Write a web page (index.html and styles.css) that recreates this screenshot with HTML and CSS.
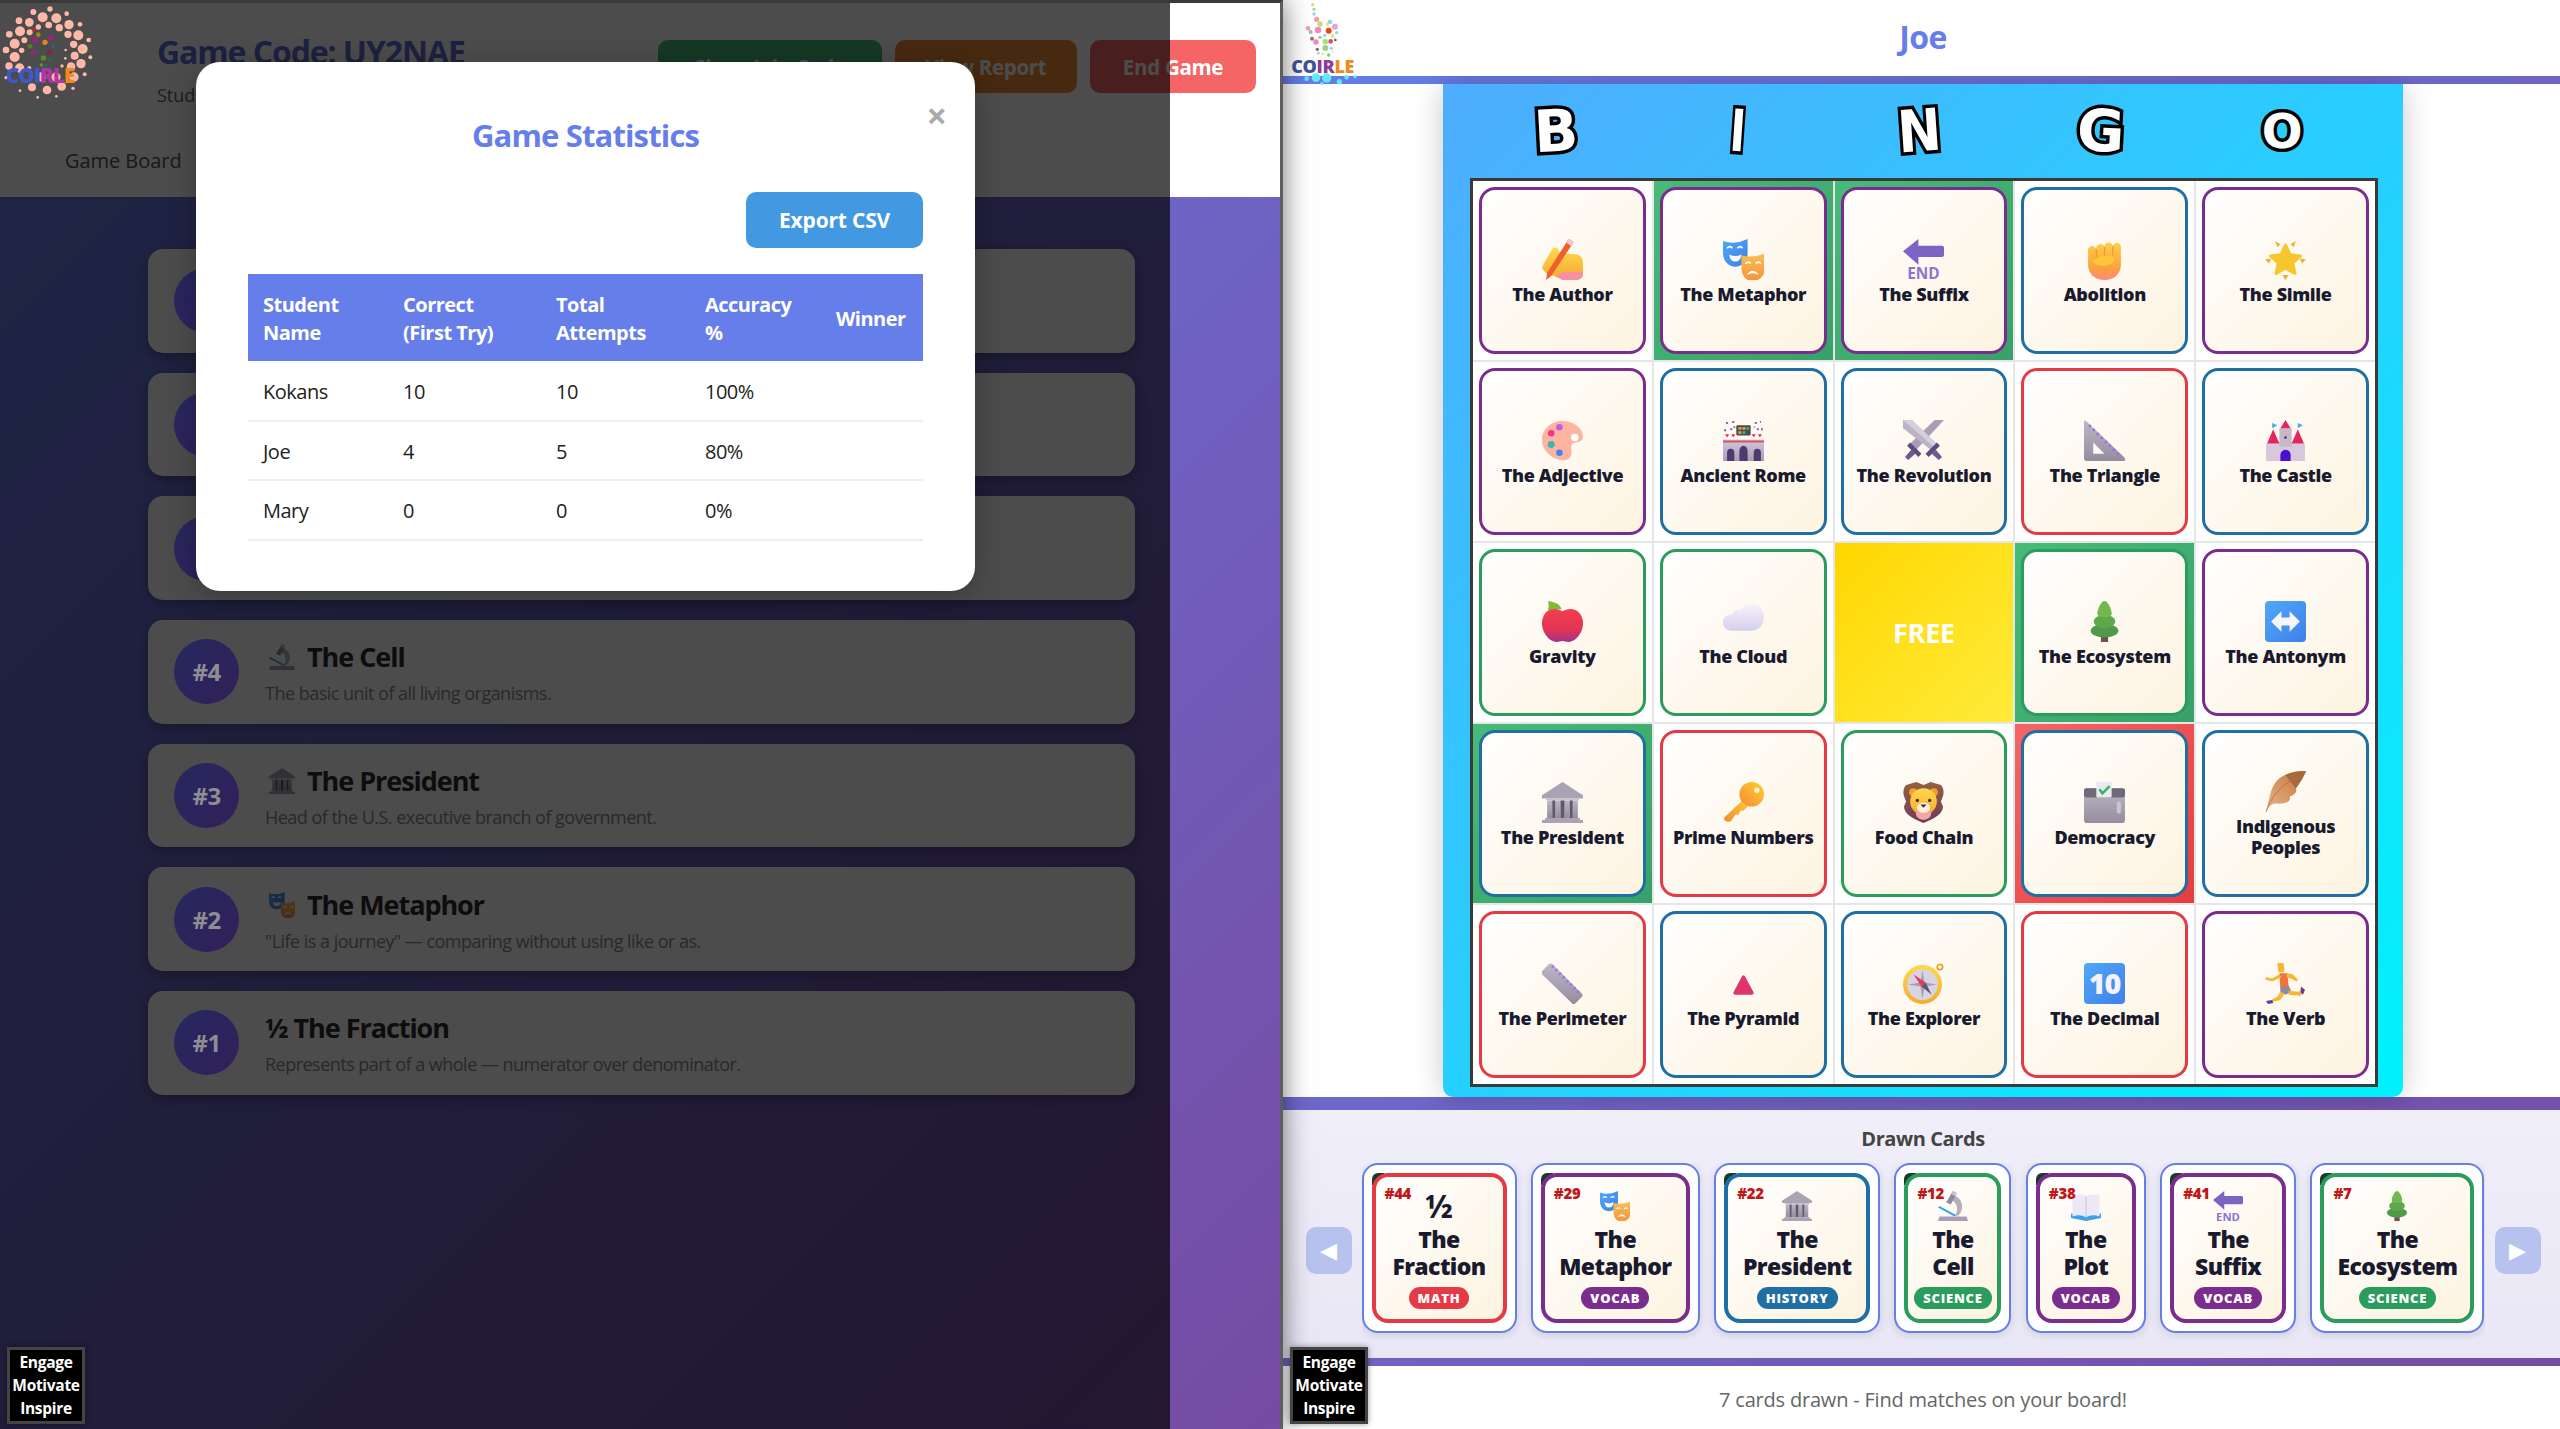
FILE: index.html
```html
<!DOCTYPE html>
<html lang="en">
<head>
<meta charset="utf-8">
<title>Bingo</title>
<link rel="stylesheet" href="styles.css">
</head>
<body>
<svg class="sprite" xmlns="http://www.w3.org/2000/svg">
<defs>
<linearGradient id="gYel" x1="0" y1="0" x2="0" y2="1"><stop offset="0" stop-color="#ffd84d"/><stop offset="1" stop-color="#f7a92e"/></linearGradient>
<linearGradient id="gFist" x1="0" y1="0" x2="0" y2="1"><stop offset="0" stop-color="#ffcf4a"/><stop offset=".7" stop-color="#fb9f3c"/><stop offset="1" stop-color="#f98a80"/></linearGradient>
<linearGradient id="gBlue" x1="0" y1="0" x2="1" y2="1"><stop offset="0" stop-color="#4fa8f8"/><stop offset="1" stop-color="#3f80ea"/></linearGradient>
<linearGradient id="gOr" x1="0" y1="0" x2="0" y2="1"><stop offset="0" stop-color="#f9c054"/><stop offset="1" stop-color="#f7933a"/></linearGradient>
<linearGradient id="gGray" x1="0" y1="0" x2="0" y2="1"><stop offset="0" stop-color="#bcb7c4"/><stop offset="1" stop-color="#938d9e"/></linearGradient>
<linearGradient id="gWall" x1="0" y1="0" x2="0" y2="1"><stop offset="0" stop-color="#d3c8dc"/><stop offset="1" stop-color="#a99cb5"/></linearGradient>
<linearGradient id="gApple" x1="0" y1="0" x2="0" y2="1"><stop offset="0" stop-color="#f63d4e"/><stop offset=".65" stop-color="#e23455"/><stop offset="1" stop-color="#a0338e"/></linearGradient>
<linearGradient id="gCloud" x1="0" y1="0" x2="0" y2="1"><stop offset="0" stop-color="#f6f4fa"/><stop offset="1" stop-color="#d5cdee"/></linearGradient>
<linearGradient id="gKey" x1="1" y1="0" x2="0" y2="1"><stop offset="0" stop-color="#ffd02e"/><stop offset="1" stop-color="#f58a36"/></linearGradient>
<linearGradient id="gFea" x1="1" y1="0" x2="0" y2="1"><stop offset="0" stop-color="#c0743a"/><stop offset="1" stop-color="#eab48a"/></linearGradient>
<linearGradient id="gMane" x1="0" y1="0" x2="0" y2="1"><stop offset="0" stop-color="#94613f"/><stop offset="1" stop-color="#6f3a5e"/></linearGradient>
</defs>
<symbol id="i-author" viewBox="0 0 40 40">
<path d="M0 28C3 21 7 15 10 10c2-3 6-2 6 2l5 2 12 1c5 0 7 4 7 9v10c0 4-3 6-7 6H20l-8-4C7 35 2 33 0 28Z" fill="url(#gYel)"/>
<path d="M14 36l6-4h20v2c0 4-3 6-7 6H20Z" fill="#f78fa0"/>
<path d="M26 0l5 3L9 36l-5 4 1-7Z" fill="#f1602c"/><path d="M26 0l5 3-2 4-5-3Z" fill="#f6c6c8"/>
</symbol>
<symbol id="i-masks" viewBox="0 0 40 40">
<path d="M0 2Q12 6 24 0V14C24 22 18 27 12 27 6 27 0 22 0 14Z" fill="url(#gBlue)"/>
<path d="M4 9q3-3 5 0M14 9q3-3 5 0" stroke="#fff" stroke-width="1.6" fill="none"/><path d="M6 15Q12 18 18 15 17 22 12 22T6 15Z" fill="#fff"/>
<path d="M18 16Q29 19 41 14V28C41 36 35 41 29 41 23 41 18 36 18 28Z" fill="url(#gOr)"/>
<path d="M22 24q3-3 5 0M32 24q3-3 5 0" stroke="#fff" stroke-width="1.6" fill="none"/><path d="M23 35Q29 27 35 35 29 32 23 35Z" fill="#fff"/>
</symbol>
<symbol id="i-arrowend" viewBox="0 0 40 40">
<path d="M0 12 15 0V6.500H38q2 0 2 2v7q0 2-2 2H15V25Z" fill="#7c64c6"/>
</symbol>
<symbol id="i-fist" viewBox="0 0 40 40">
<path d="M4 12a4 4 0 0 1 8-2 4 4 0 0 1 8-2 4 4 0 0 1 8-1 4 4 0 0 1 8 2V25C36 34 29 40 20 40 11 40 4 34 4 25Z" fill="url(#gFist)"/>
<path d="M12 10v8M20 8v8M28 7v9" stroke="#e99a2e" stroke-width="1.200"/>
<path d="M8 22Q18 14 30 18 29 25 21 26 13 27 8 22Z" fill="#ffc53d"/>
</symbol>
<symbol id="i-star" viewBox="0 0 40 40">
<path d="M20 6l4.500 9.500 10 1-7.500 7 2.200 10L20 28.500 10.800 33.500l2.200-10-7.500-7 10-1Z" fill="#f6c72c" stroke="#f6c72c" stroke-width="3" stroke-linejoin="round"/>
<path d="M10 2l5 3-3 3ZM30 2l-5 3 3 3ZM0 20l6-1-2 5ZM40 20l-6-1 2 5ZM20 40l-3-5h6Z" fill="#edb321"/>
</symbol>
<symbol id="i-palette" viewBox="0 0 40 40">
<path d="M20 1C32 1 40 9 40 16 40 23 32 20 29 24 27 28 31 33 27 37 23 41 17 39 12 37 4 33 0 26 0 19 0 9 9 1 20 1Z" fill="#ffb4a2"/>
<circle cx="32" cy="17" r="3.600" fill="#fff"/><circle cx="17" cy="7" r="3.200" fill="#c25be6"/><circle cx="9" cy="13" r="3.200" fill="#f2348a"/><circle cx="9" cy="24" r="3.400" fill="#38b6b0"/><circle cx="17" cy="32" r="3.200" fill="#3f86f0"/>
</symbol>
<symbol id="i-rome" viewBox="0 0 40 40">
<path d="M0 19H40V40H0Z" fill="url(#gWall)"/><path d="M0 20H40V22H0Z" fill="#e0505e"/>
<path d="M4 40V32a3.500 4 0 0 1 7 0v8ZM16 40V30a4 5 0 0 1 8 0v10ZM30 40V32a3.500 4 0 0 1 7 0v8Z" fill="#51386e"/>
<rect x="13" y="5" width="14" height="10" rx="1" fill="#4e4856"/><rect x="15" y="7" width="3" height="2.500" fill="#f2a03c"/><rect x="19" y="7" width="3" height="2.500" fill="#f2a03c"/><rect x="23" y="7" width="2.500" height="2.500" fill="#3fb56a"/><rect x="15" y="11" width="3" height="2.500" fill="#f2a03c"/><rect x="19" y="11" width="3" height="2.500" fill="#3fb56a"/>
<path d="M2 14h4l-2 3ZM8 14h4l-2 3ZM28 14h4l-2 3ZM34 14h4l-2 3Z" fill="#e0305e"/>
<path d="M3 2h2v2H3ZM9 1h2v2H9ZM7 8h2v2H7ZM31 2h2v2h-2ZM36 1h1v2h-1ZM33 8h2v2h-2ZM1 9h2v2H1ZM37 8h2v2h-2Z" fill="#8b5fb8"/><path d="M10 6h2v2h-2ZM30 6h1v2h-1Z" fill="#49b86e"/>
</symbol>
<symbol id="i-swords" viewBox="0 0 40 40">
<path d="M40 0H31L7 23l6 6Z" fill="#a79fb5"/>
<path d="M0 0H9L33 23l-6 6Z" fill="#d4cfdc"/><path d="M0 0 30 26l-3 3L0 8Z" fill="#b9b3c5"/>
<path d="M4 25l3-3 11 11-3 3ZM36 25l-3-3-11 11 3 3Z" fill="#5d4a7e"/>
<path d="M8 29l4 4-7 6-3-3ZM32 29l-4 4 7 6 3-3Z" fill="#6d5990"/>
</symbol>
<symbol id="i-triangle" viewBox="0 0 40 40">
<path d="M0 2Q0 0 2 1L39 36Q42 40 38 40H3Q0 40 0 37Z" fill="url(#gGray)"/>
<path d="M9 22 20 33H9Z" fill="#fffaf2"/>
<path d="M5 5 36 36" stroke="#9a68f0" stroke-width="2.500" stroke-dasharray="2 3.500" fill="none"/>
</symbol>
<symbol id="i-castle" viewBox="0 0 40 40">
<path d="M1 23h4v-2h4v2h4v-2h14v2h4v-2h4v2h4V40H1Z" fill="#d7c8de"/>
<rect x="14" y="8" width="12" height="18" fill="#c8b9c6"/>
<path d="M20 0l5 8H15ZM8 9l6 14H2ZM32 9l6 14H26Z" fill="#e8245f"/>
<path d="M15 40V34a5 5 0 0 1 10 0v6Z" fill="#4a0fd0"/><circle cx="20" cy="17" r="1.200" fill="#4a0fd0"/>
<path d="M7 8V3l5 2ZM32 8V3l5 2Z" fill="#38b6e0"/>
</symbol>
<symbol id="i-apple" viewBox="0 0 40 40">
<path d="M4 9C8 10 6 0 6 0 12 1 18 3 19 8Z" fill="#7dbb32"/>
<path d="M20 10C26 6 38 6 40 20 41 30 33 40 26 40 23 40 22 39 20 39S17 40 14 40C7 40 -1 30 0 20 2 6 14 6 20 10Z" fill="url(#gApple)"/>
</symbol>
<symbol id="i-cloud" viewBox="0 0 40 40">
<path d="M9 29C3 29 0 25 0 21 0 16 4 13 9 13 11 9 14 8 17 9 20 4 25 2 30 3 36 4 40 9 40 15 40 23 35 29 27 29Z" fill="url(#gCloud)"/>
</symbol>
<symbol id="i-tree" viewBox="0 0 40 40">
<path d="M16.500 34h7v6h-7Z" fill="#7b4a52"/>
<ellipse cx="20" cy="29" rx="13.500" ry="6.500" fill="#4f9a4a"/>
<ellipse cx="20" cy="20" rx="10.500" ry="6.500" fill="#5ea84c"/>
<path d="M20 0C23 0 27 8 27 12 27 15 24 16 20 16S13 15 13 12C13 8 17 0 20 0Z" fill="#72b84f"/>
</symbol>
<symbol id="i-arrows" viewBox="0 0 40 40">
<rect width="40" height="40" rx="4" fill="url(#gBlue)"/>
<path d="M6 20 16 10V16H24V10L34 20 24 30V24H16V30Z" fill="#f8f4fc"/>
</symbol>
<symbol id="i-bank" viewBox="0 0 40 40">
<path d="M20 0 40 13V16H0V13Z" fill="#a9a3b3"/>
<path d="M4 16h32v2H4Z" fill="#c5c0cd"/>
<path d="M5 18h5v17H5ZM13 18h5v17h-5ZM22 18h5v17h-5ZM30 18h5v17h-5Z" fill="url(#gGray)"/>
<path d="M10 18h3v17h-3ZM18 18h4v17h-4ZM27 18h3v17h-3Z" fill="#5e5870"/>
<path d="M3 35H37V37H40V40H0V37H3Z" fill="#aaa4b5"/>
</symbol>
<symbol id="i-key" viewBox="0 0 40 40">
<path d="M2 34 22 15l5 6-7 7-3 0-2 4-3 0-4 6-3 1Q-1 37 2 34Z" fill="url(#gKey)"/>
<circle cx="28" cy="12" r="12" fill="url(#gKey)"/><circle cx="33" cy="8" r="2.600" fill="#fff6c8"/>
</symbol>
<symbol id="i-lion" viewBox="0 0 40 40">
<path d="M3 3 13 0l7 3 7-3 10 3c3 3 3 8 2 11l-2 5 2 5c0 7-8 12-19 16C9 36 1 31 1 24l2-5-2-5C0 11 0 6 3 3Z" fill="url(#gMane)"/>
<circle cx="10" cy="10" r="4" fill="#f4a12c"/><circle cx="30" cy="10" r="4" fill="#f4a12c"/>
<ellipse cx="20" cy="19" rx="13" ry="13" fill="url(#gYel)"/>
<ellipse cx="20" cy="31" rx="7.500" ry="6" fill="#f3a7a0"/><ellipse cx="20" cy="25" rx="6.500" ry="5" fill="#fff0d8"/>
<path d="M17 22h6l-3 3Z" fill="#4a2a2a"/><circle cx="14" cy="18" r="1.600" fill="#3a2a2a"/><circle cx="26" cy="18" r="1.600" fill="#3a2a2a"/>
</symbol>
<symbol id="i-ballot" viewBox="0 0 40 40">
<rect y="6" width="40" height="34" rx="3" fill="url(#gGray)"/>
<rect y="6" width="40" height="9" rx="2" fill="#6f6a78"/>
<rect x="12" y="0" width="15" height="15" rx="1" fill="#ece8f2"/>
<path d="M15 7l3 4 7-7" stroke="#2fb860" stroke-width="2.400" fill="none"/>
<rect x="32" y="19" width="4" height="12" rx="2" fill="#c9c5cf"/>
</symbol>
<symbol id="i-feather" viewBox="0 0 40 40">
<path d="M40 0C28 0 15 3 9 13 5 20 4 28 1 40 5 32 8 31 14 32 22 32 26 28 24 25 29 24 32 19 30 17 34 12 38 5 40 0Z" fill="url(#gFea)"/>
<path d="M40 0C32 0 25 1 20 4L30 17C34 12 38 5 40 0Z" fill="#a66a3c"/><path d="M1 40C5 28 14 14 30 7" stroke="#b87040" stroke-width=".8" fill="none"/>
</symbol>
<symbol id="i-ruler" viewBox="0 0 40 40">
<path d="M0 8 7 1Q8 0 10 1L39 30Q40 32 39 33L32 40Q30 41 29 39L0 11Q-1 9 0 8Z" fill="url(#gGray)"/>
<path d="M10 3 38 31" stroke="#9a68f0" stroke-width="3" stroke-dasharray="1.500 3.500" fill="none"/>
</symbol>
<symbol id="i-tri" viewBox="0 0 40 40">
<path d="M20 12Q21 12 22 14L30 29Q30 31 28 31H12Q10 31 10 29L18 14Q19 12 20 12Z" fill="#e0346e"/>
</symbol>
<symbol id="i-compass" viewBox="0 0 40 40">
<circle cx="36" cy="4" r="2.600" fill="none" stroke="#e9a32f" stroke-width="1.800"/>
<circle cx="19" cy="21" r="19" fill="url(#gYel)"/><circle cx="19" cy="21" r="15" fill="#d9d4e2"/>
<path d="M19 7l2 12 12 2-12 2-2 12-2-12-12-2 12-2Z" fill="#a5a0ae"/>
<path d="M10 11l12 8-4 4Z" fill="#e83a5e"/><path d="M28 31 18 23l4-4Z" fill="#5e5870"/>
</symbol>
<symbol id="i-keycap" viewBox="0 0 40 40">
<rect width="40" height="40" rx="4" fill="url(#gBlue)"/>
</symbol>
<symbol id="i-runner" viewBox="0 0 40 40">
<path d="M12 0h6l1 6-1 3h-5Z" fill="#f7b733"/>
<path d="M14 10h8l1 13-8 2Z" fill="#f5713a"/>
<path d="M21 10l6 1 5 5-1 2-6-3-4-1ZM14 11 7 15 1 14l-1 2 7 2 9-4Z" fill="#f7b733"/>
<path d="M15 24l8-2 3 6-6 3-5-3Z" fill="#8f8a9c"/>
<path d="M23 27l10 1 2-3 2 1-2 6-12-1ZM15 28l4 2-4 6-8 2-1-2 6-3Z" fill="#f7b733"/>
<path d="M35 23l4 3-2 5-2-2ZM1 37l6-1 1 3-5 1Z" fill="#5a3f9a"/>
</symbol>
<symbol id="i-micro" viewBox="0 0 40 40">
<path d="M2 34H38L40 40H0Z" fill="#a79fb5"/>
<path d="M22 6C32 10 36 22 28 32L22 34C28 26 26 16 18 12Z" fill="#b5afbd"/>
<path d="M20 0l5 3-8 15-6-3Z" fill="#8f8a9c"/><path d="M20 0l5 3-2 4-5-3Z" fill="#c9c5cf"/>
<path d="M2 20 24 32l-2 2L0 22Z" fill="#38a3f0"/>
</symbol>
<symbol id="i-book" viewBox="0 0 40 40">
<path d="M0 36V30L20 33 40 30V36L20 40Z" fill="#3ba0ee"/>
<path d="M2 6 Q12 2 20 7 Q28 2 38 6V34Q28 30 20 35 12 30 2 34Z" fill="#ece8f6"/>
<path d="M20 7V35" stroke="#cfc8e2" stroke-width="1.500"/>
</symbol>
</svg>

<div class="left">
  <header class="lhead">
    <div class="lhead-top">
      <svg class="logo1" viewBox="0 0 300 300">
        <g fill="#ffb8a6"><circle cx="100" cy="27" r="9"/><circle cx="150" cy="18" r="8"/><circle cx="200" cy="32" r="7"/><circle cx="57" cy="53" r="10"/><circle cx="128" cy="43" r="15"/><circle cx="169" cy="46" r="15"/><circle cx="240" cy="64" r="7"/><circle cx="88" cy="58" r="13"/><circle cx="146" cy="66" r="10"/><circle cx="207" cy="65" r="14"/><circle cx="178" cy="74" r="11"/><circle cx="60" cy="85" r="15"/><circle cx="115" cy="72" r="8"/><circle cx="28" cy="94" r="10"/><circle cx="89" cy="88" r="9"/><circle cx="204" cy="94" r="11"/><circle cx="235" cy="97" r="15"/><circle cx="266" cy="111" r="7"/><circle cx="73" cy="112" r="9"/><circle cx="44" cy="122" r="15"/><circle cx="221" cy="124" r="11"/><circle cx="248" cy="138" r="15"/><circle cx="18" cy="141" r="10"/><circle cx="65" cy="142" r="8"/><circle cx="224" cy="158" r="12"/><circle cx="44" cy="162" r="15"/><circle cx="271" cy="163" r="6"/><circle cx="197" cy="141" r="4"/><circle cx="196" cy="166" r="4"/><circle cx="243" cy="182" r="14"/><circle cx="213" cy="191" r="13"/><circle cx="186" cy="189" r="5"/><circle cx="27" cy="189" r="11"/><circle cx="59" cy="195" r="14"/><circle cx="88" cy="195" r="6"/><circle cx="254" cy="214" r="6"/><circle cx="222" cy="222" r="14"/><circle cx="18" cy="224" r="5"/><circle cx="96" cy="253" r="12"/><circle cx="141" cy="261" r="13"/><circle cx="185" cy="250" r="13"/><circle cx="219" cy="256" r="5"/><circle cx="60" cy="263" r="4"/><circle cx="113" cy="283" r="4"/><circle cx="169" cy="280" r="4"/><circle cx="124" cy="222" r="14"/><circle cx="168" cy="222" r="14"/></g>
        <g><circle cx="106" cy="112" r="10" fill="#8e2a7a"/><circle cx="153" cy="104" r="9" fill="#8e2a7a"/><circle cx="100" cy="150" r="8" fill="#8e2a7a"/><circle cx="148" cy="148" r="8" fill="#7a2a3a"/><circle cx="135" cy="118" r="8" fill="#e0861f"/><circle cx="115" cy="95" r="7" fill="#8c8c20"/><circle cx="130" cy="165" r="8" fill="#5c8a20"/><circle cx="90" cy="130" r="7" fill="#5c7a30"/><circle cx="102" cy="80" r="6" fill="#b03030"/><circle cx="160" cy="130" r="5" fill="#2a6a7a"/><circle cx="150" cy="170" r="4" fill="#2a6a7a"/><circle cx="124" cy="186" r="5" fill="#7a8a20"/><circle cx="108" cy="184" r="4" fill="#2a5a7a"/><circle cx="137" cy="187" r="5" fill="#1a7a4a"/></g>
        <text x="120" y="241" class="svgt logot l1"><tspan fill="#3f58c8">COI</tspan><tspan fill="#b035aa">RL</tspan><tspan fill="#f28a1a">E</tspan></text>
      </svg>
      <div class="info">
        <h1 class="code">Game Code: UY2NAE</h1>
        <p class="students">Students: 3</p>
      </div>
      <div class="actions">
        <button class="btn btn-green">Show Join Code</button>
        <button class="btn btn-orange">View Report</button>
        <button class="btn btn-red">End Game</button>
      </div>
    </div>
    <nav class="tabs"><span>Game Board</span></nav>
  </header>

  <main class="history-list">
    <article class="called"><div class="rank"></div></article>
    <article class="called"><div class="rank"></div></article>
    <article class="called"><div class="rank"></div></article>
    <article class="called"><div class="rank">#4</div><div class="called-text"><h3><svg class="tic"><use href="#i-micro"/></svg>The Cell</h3><p>The basic unit of all living organisms.</p></div></article>
    <article class="called"><div class="rank">#3</div><div class="called-text"><h3><svg class="tic"><use href="#i-bank"/></svg>The President</h3><p>Head of the U.S. executive branch of government.</p></div></article>
    <article class="called"><div class="rank">#2</div><div class="called-text"><h3><svg class="tic"><use href="#i-masks"/></svg>The Metaphor</h3><p>"Life is a journey" — comparing without using like or as.</p></div></article>
    <article class="called"><div class="rank">#1</div><div class="called-text"><h3>½ The Fraction</h3><p>Represents part of a whole — numerator over denominator.</p></div></article>
  </main>

  <div class="dim"></div>
  <section class="modal">
    <button class="close">×</button>
    <h2 class="modal-title">Game Statistics</h2>
    <div class="export-row"><button class="export">Export CSV</button></div>
    <table class="stats">
      <colgroup><col class="c1"><col class="c2"><col class="c3"><col class="c4"><col class="c5"></colgroup>
      <thead><tr><th>Student<br>Name</th><th>Correct<br>(First Try)</th><th>Total<br>Attempts</th><th>Accuracy<br>%</th><th>Winner</th></tr></thead>
      <tbody>
        <tr><td>Kokans</td><td>10</td><td>10</td><td>100%</td><td></td></tr>
        <tr><td>Joe</td><td>4</td><td>5</td><td>80%</td><td></td></tr>
        <tr><td>Mary</td><td>0</td><td>0</td><td>0%</td><td></td></tr>
      </tbody>
    </table>
  </section>
  <div class="tagline tagline-left">Engage<br>Motivate<br>Inspire</div>
</div>

<div class="right">
  <header class="rhead">
    <svg class="logo2" viewBox="0 0 240 255">
      <g fill="#60e8fb"><circle cx="50" cy="236" r="7"/><circle cx="78" cy="233" r="13"/><circle cx="110" cy="234" r="14"/><circle cx="148" cy="245" r="8"/><circle cx="96" cy="250" r="5"/><circle cx="170" cy="232" r="7"/><circle cx="195" cy="230" r="5"/></g>
      <circle cx="68" cy="14" r="5" fill="#f5d76e"/><circle cx="72" cy="28" r="5" fill="#a8d8a8"/><circle cx="72" cy="42" r="5" fill="#8ed8e8"/><circle cx="80" cy="58" r="8" fill="#f2a0a8"/><circle cx="54" cy="85" r="7" fill="#f2a0a8"/><circle cx="90" cy="72" r="8" fill="#c0e070"/><circle cx="120" cy="66" r="7" fill="#8ed8e8"/><circle cx="135" cy="80" r="9" fill="#e8a0d8"/><circle cx="84" cy="90" r="10" fill="#f28ac0"/><circle cx="116" cy="92" r="9" fill="#e84a10"/><circle cx="112" cy="72" r="5" fill="#f5d76e"/><circle cx="140" cy="98" r="5" fill="#8ed8e8"/><circle cx="62" cy="96" r="6" fill="#80c8a8"/><circle cx="90" cy="112" r="5" fill="#80d890"/><circle cx="66" cy="116" r="6" fill="#a07060"/><circle cx="78" cy="126" r="8" fill="#f088c0"/><circle cx="106" cy="125" r="8" fill="#a8e070"/><circle cx="122" cy="124" r="7" fill="#e04868"/><circle cx="136" cy="120" r="4" fill="#706060"/><circle cx="128" cy="108" r="6" fill="#f5e070"/><circle cx="104" cy="106" r="5" fill="#8ed8e8"/><circle cx="124" cy="145" r="5" fill="#8ed8e8"/><circle cx="106" cy="144" r="9" fill="#a0d080"/><circle cx="82" cy="148" r="5" fill="#707070"/><circle cx="98" cy="162" r="4" fill="#f5e070"/><circle cx="85" cy="160" r="4" fill="#8ed8e8"/><circle cx="116" cy="165" r="5" fill="#70d090"/><circle cx="128" cy="156" r="3" fill="#f5e070"/>
      <text x="98" y="220" class="svgt logot l2"><tspan fill="#3f5499">CO</tspan><tspan fill="#8e3b96">IR</tspan><tspan fill="#f28a1a">LE</tspan></text>
    </svg>
    <h1 class="player">Joe</h1>
  </header>
  <div class="zone">
    <div class="panel">
      <div class="bingo"><span class="tb">B</span><span class="ti">I</span><span class="tn">N</span><span class="tg">G</span><span class="to">O</span></div>
      <div class="grid">
        <div class="cell"><div class="card vocab"><svg class="ic"><use href="#i-author"/></svg><span>The Author</span></div></div>
        <div class="cell marked"><div class="card vocab"><svg class="ic"><use href="#i-masks"/></svg><span>The Metaphor</span></div></div>
        <div class="cell marked"><div class="card vocab"><svg class="ic" viewBox="0 0 40 40"><use href="#i-arrowend"/><text x="20" y="39.500" class="svgt end">END</text></svg><span>The Suffix</span></div></div>
        <div class="cell"><div class="card history"><svg class="ic"><use href="#i-fist"/></svg><span>Abolition</span></div></div>
        <div class="cell"><div class="card vocab"><svg class="ic"><use href="#i-star"/></svg><span>The Simile</span></div></div>

        <div class="cell"><div class="card vocab"><svg class="ic"><use href="#i-palette"/></svg><span>The Adjective</span></div></div>
        <div class="cell"><div class="card history"><svg class="ic"><use href="#i-rome"/></svg><span>Ancient Rome</span></div></div>
        <div class="cell"><div class="card history"><svg class="ic"><use href="#i-swords"/></svg><span>The Revolution</span></div></div>
        <div class="cell"><div class="card math"><svg class="ic"><use href="#i-triangle"/></svg><span>The Triangle</span></div></div>
        <div class="cell"><div class="card history"><svg class="ic"><use href="#i-castle"/></svg><span>The Castle</span></div></div>

        <div class="cell"><div class="card science"><svg class="ic"><use href="#i-apple"/></svg><span>Gravity</span></div></div>
        <div class="cell"><div class="card science"><svg class="ic"><use href="#i-cloud"/></svg><span>The Cloud</span></div></div>
        <div class="cell free">FREE</div>
        <div class="cell marked"><div class="card science"><svg class="ic"><use href="#i-tree"/></svg><span>The Ecosystem</span></div></div>
        <div class="cell"><div class="card vocab"><svg class="ic"><use href="#i-arrows"/></svg><span>The Antonym</span></div></div>

        <div class="cell marked"><div class="card history"><svg class="ic"><use href="#i-bank"/></svg><span>The President</span></div></div>
        <div class="cell"><div class="card math"><svg class="ic"><use href="#i-key"/></svg><span>Prime Numbers</span></div></div>
        <div class="cell"><div class="card science"><svg class="ic"><use href="#i-lion"/></svg><span>Food Chain</span></div></div>
        <div class="cell wrong"><div class="card history"><svg class="ic"><use href="#i-ballot"/></svg><span>Democracy</span></div></div>
        <div class="cell"><div class="card history"><svg class="ic"><use href="#i-feather"/></svg><span>Indigenous Peoples</span></div></div>

        <div class="cell"><div class="card math"><svg class="ic"><use href="#i-ruler"/></svg><span>The Perimeter</span></div></div>
        <div class="cell"><div class="card history"><svg class="ic"><use href="#i-tri"/></svg><span>The Pyramid</span></div></div>
        <div class="cell"><div class="card history"><svg class="ic"><use href="#i-compass"/></svg><span>The Explorer</span></div></div>
        <div class="cell"><div class="card math"><svg class="ic" viewBox="0 0 40 40"><use href="#i-keycap"/><text x="20" y="30" class="svgt ten">10</text></svg><span>The Decimal</span></div></div>
        <div class="cell"><div class="card vocab"><svg class="ic"><use href="#i-runner"/></svg><span>The Verb</span></div></div>
      </div>
    </div>
  </div>

  <section class="drawn">
    <h3 class="drawn-title">Drawn Cards</h3>
    <div class="carousel">
      <button class="nav">◀</button>
      <div class="track">
        <div class="dc"><div class="dcard math"><b class="num">#44</b><span class="half">½</span><span class="dname">The<br>Fraction</span><em class="tag">MATH</em></div></div>
        <div class="dc"><div class="dcard vocab"><b class="num">#29</b><svg class="dic"><use href="#i-masks"/></svg><span class="dname">The<br>Metaphor</span><em class="tag">VOCAB</em></div></div>
        <div class="dc"><div class="dcard history"><b class="num">#22</b><svg class="dic"><use href="#i-bank"/></svg><span class="dname">The<br>President</span><em class="tag">HISTORY</em></div></div>
        <div class="dc"><div class="dcard science"><b class="num">#12</b><svg class="dic"><use href="#i-micro"/></svg><span class="dname">The<br>Cell</span><em class="tag">SCIENCE</em></div></div>
        <div class="dc"><div class="dcard vocab"><b class="num">#38</b><svg class="dic"><use href="#i-book"/></svg><span class="dname">The<br>Plot</span><em class="tag">VOCAB</em></div></div>
        <div class="dc"><div class="dcard vocab"><b class="num">#41</b><svg class="dic" viewBox="0 0 40 40"><use href="#i-arrowend"/><text x="20" y="39.500" class="svgt end">END</text></svg><span class="dname">The<br>Suffix</span><em class="tag">VOCAB</em></div></div>
        <div class="dc"><div class="dcard science"><b class="num">#7</b><svg class="dic"><use href="#i-tree"/></svg><span class="dname">The<br>Ecosystem</span><em class="tag">SCIENCE</em></div></div>
      </div>
      <button class="nav">▶</button>
    </div>
  </section>
  <footer class="rfoot">7 cards drawn - Find matches on your board!</footer>
  <div class="tagline tagline-right">Engage<br>Motivate<br>Inspire</div>
</div>
</body>
</html>
```
FILE: styles.css
```css
* { box-sizing: border-box; }
html, body { margin: 0; height: 1429px; overflow: hidden; }
body { display: flex; font-family: "Open Sans", "Noto Sans", sans-serif; background: #fff; color: #333; }
h1, h2, h3, p { margin: 0; }
button { font-family: inherit; border: 0; }
.sprite { position: absolute; width: 0; height: 0; }
.svgt { font-family: "Open Sans", sans-serif; font-weight: 800; text-anchor: middle; }
.svgt.end { font-size: 15px; fill: #8c74d0; font-weight: 700; }
.svgt.ten { font-size: 28px; fill: #f6f2fc; letter-spacing: -1px; }
.svgt.logot { font-weight: 800; }
.svgt.l1 { font-size: 62px; letter-spacing: -3px; }
.svgt.l2 { font-size: 54px; letter-spacing: -1px; }

/* left pane */
.left { position: relative; z-index: 2; flex: none; width: 1283px; height: 1429px; border-top: 3px solid #3a3a3a; border-right: 3px solid #5e5e5e; background: linear-gradient(135deg, #667eea, #764ba2); box-shadow: 0 0 26px rgba(0,0,0,.55); }
.lhead { height: 194px; background: #fff; }
.lhead-top { display: flex; height: 120px; }
.logo1 { position: relative; z-index: 11; width: 100px; height: 100px; flex: none; }
.info { margin-left: 57px; padding-top: 27px; }
.code { font-size: 32px; line-height: 44px; font-weight: 700; color: #5a70d8; letter-spacing: -1.1px; white-space: nowrap; }
.students { font-size: 18px; line-height: 24px; margin-top: 9px; color: #666; }
.actions { display: flex; gap: 13px; margin-left: auto; padding: 37px 24px 0 0; }
.btn { height: 53px; border-radius: 10px; padding: 0 28px; color: #fff; font-size: 20.500px; font-weight: 700; letter-spacing: -.3px; white-space: nowrap; }
.btn-green { width: 224px; background: #48bb78; }
.btn-orange { width: 182px; background: #ed8936; }
.btn-red { width: 166px; background: #f56565; }
.tabs { padding-left: 65px; padding-top: 24px; font-size: 20px; line-height: 28px; color: #555; letter-spacing: -.05px; }

.history-list { display: flex; flex-direction: column; gap: 20px; width: 987px; margin: 52px 0 0 148px; }
.called { display: flex; align-items: center; gap: 26px; height: 103.67px; padding: 0 26px; border-radius: 15px; background: #fff; box-shadow: 0 4px 14px rgba(0,0,0,.3); }
.rank { position: relative; z-index: 11; flex: none; display: flex; align-items: center; justify-content: center; width: 65px; height: 65px; border-radius: 50%; background: linear-gradient(135deg, #25285f, #33205a); color: #8d8d92; font-size: 24px; font-weight: 700; letter-spacing: -.5px; }
.called-text { padding-top: 2px; }
.called h3 { display: flex; align-items: center; gap: 12px; font-size: 27px; line-height: 36px; font-weight: 700; color: #2c2c2c; letter-spacing: -1.05px; white-space: nowrap; }
.tic { width: 26px; height: 26px; flex: none; margin-left: 4px; }
.called p { font-size: 18px; line-height: 26px; margin-top: 5px; color: #8a8a8a; letter-spacing: -.52px; white-space: nowrap; }

.dim { position: absolute; z-index: 10; left: 0; top: 0; width: 1170px; height: 100%; background: rgba(0,0,0,.7); }
.modal { position: absolute; z-index: 12; left: 196px; top: 59px; width: 779px; height: 529px; padding: 51px 52px 0; border-radius: 24px; background: #fff; box-shadow: 0 6px 30px rgba(0,0,0,.25); }
.close { position: absolute; top: 32px; right: 28px; padding: 0; background: none; color: #aaa; font-size: 36px; line-height: 44px; font-weight: 700; }
.modal-title { text-align: center; font-size: 31px; line-height: 44px; font-weight: 700; color: #667eea; letter-spacing: -.85px; }
.export-row { display: flex; justify-content: flex-end; margin-top: 35px; }
.export { width: 177px; height: 56px; border-radius: 10px; background: #4299e1; color: #fff; font-size: 21px; font-weight: 700; letter-spacing: -.2px; }
.stats { width: 675px; margin-top: 26px; border-collapse: collapse; table-layout: fixed; font-size: 20px; letter-spacing: -.5px; }
.c1 { width: 140px; } .c2 { width: 153px; } .c3 { width: 149px; } .c4 { width: 131px; } .c5 { width: 102px; }
.stats th { height: 87px; padding: 2px 15px 0; background: #667eea; color: #fff; font-weight: 700; line-height: 28px; text-align: left; }
.stats td { height: 59.500px; padding: 2px 15px 0; border-bottom: 2px solid #eee; color: #222; }

.tagline { position: absolute; z-index: 20; width: 78px; height: 77px; display: flex; align-items: center; justify-content: center; text-align: center; background: #000; border: 3px solid #444; color: #fff; font-size: 15.500px; line-height: 23px; font-weight: 700; letter-spacing: -.3px; box-shadow: 0 0 6px rgba(0,0,0,.4); }
.tagline-left { left: 7px; top: 1344px; }
.tagline-right { left: 1290px; top: 1347px; }

/* right pane */
.right { flex: 1; min-width: 0; display: flex; flex-direction: column; height: 1429px; background: linear-gradient(135deg, #667eea, #764ba2); }
.rhead { position: relative; flex: none; height: 76px; margin-bottom: 8px; padding: 0 0 3px 3px; display: flex; align-items: center; justify-content: center; background: #fff; }
.logo2 { position: absolute; left: 7px; top: 0; width: 80px; height: 85px; }
.player { font-size: 32px; line-height: 40px; font-weight: 700; color: #667eea; letter-spacing: -.6px; }
.zone { flex: none; height: 1013px; margin-bottom: 12.500px; padding-left: 3px; display: flex; justify-content: center; background: #fff; }
.panel { width: 960px; height: 1013px; padding: 0 27px; border-radius: 0 0 10px 10px; background: linear-gradient(135deg, #4facfe, #00f2fe); box-shadow: 0 0 30px rgba(0,0,0,.22); }
.bingo { display: grid; grid-template-columns: repeat(5, 1fr); align-items: center; justify-items: center; height: 94px; width: 908px; margin-left: -5px; font-family: "DejaVu Sans", sans-serif; font-size: 58px; font-weight: 700; color: #fff; -webkit-text-stroke: 7px #000; paint-order: stroke fill; }
.bingo span { display: block; line-height: 94px; }
.tb { transform: rotate(-3deg); } .ti { transform: rotate(4deg) scaleX(.72); } .tn { transform: rotate(-4deg) scaleX(.9); } .tg { transform: rotate(3deg); } .to { font-size: 48px; }
.grid { display: grid; grid-template-columns: repeat(5, 1fr); grid-template-rows: repeat(5, 1fr); gap: 2px; width: 908px; height: 909px; border: 3px solid #3a3a3a; background: #e6e6e6; }
.cell { min-width: 0; padding: 6px; background: #fff; }
.cell.marked { background: linear-gradient(135deg, #48bb78, #38a169); }
.cell.wrong { background: linear-gradient(135deg, #f56565, #e53e3e); }
.cell.free { display: flex; align-items: center; justify-content: center; background: linear-gradient(135deg, #ffd700, #ffeb3b); color: #fff; font-size: 27px; font-weight: 700; letter-spacing: -.2px; }
.card { display: flex; flex-direction: column; align-items: center; justify-content: center; gap: 4px; height: 100%; padding-top: 2px; border: 3px solid; border-radius: 16px; background: linear-gradient(135deg, #fff, #fdf3e0); }
.card span { max-width: 152px; text-align: center; font-size: 18px; line-height: 21px; font-weight: 800; color: #1a1a2e; letter-spacing: -.35px; }
.ic { width: 41px; height: 41px; flex: none; }

.drawn { flex: none; height: 248px; margin-bottom: 8px; padding: 16px 0 0 3px; background: linear-gradient(180deg, #f0eef9, #e9e7f5); }
.drawn-title { text-align: center; font-size: 20px; line-height: 26px; font-weight: 700; color: #444; letter-spacing: -.4px; }
.carousel { display: flex; align-items: flex-start; justify-content: center; gap: 10px; margin-top: 11px; }
.nav { flex: none; width: 46px; height: 47px; margin-top: 64px; padding: 0; border-radius: 10px; background: #b8c2ee; color: #fff; font-size: 22px; line-height: 47px; font-family: "DejaVu Sans", sans-serif; }
.track { display: grid; grid-template-columns: 155px 169px 166px 117px 120px 136px 174px; column-gap: 14.330px; width: 1123px; height: 176px; overflow: hidden; }
.dc { position: relative; height: 170px; padding: 8px; border: 2px solid #667eea; border-radius: 16px; background: #fff; box-shadow: 0 2px 10px rgba(0,0,0,.12); }
.dc::before { content: ""; position: absolute; left: 8px; top: 8px; width: 12px; height: 12px; border-top-left-radius: 6px; background: #1a3a2a; }
.dcard { position: relative; display: flex; flex-direction: column; align-items: center; height: 150px; padding-top: 14px; border: 4px solid; border-radius: 16px; background: linear-gradient(135deg, #fff, #fdf3e0); }
.num { position: absolute; left: 9px; top: 6px; font-size: 15px; line-height: 20px; font-weight: 800; color: #c01818; letter-spacing: -.3px; }
.dic { width: 30px; height: 30px; flex: none; }
.half { height: 30px; font-size: 32px; line-height: 30px; font-weight: 700; color: #1a1a2e; }
.dname { margin-top: 5px; text-align: center; font-size: 23px; line-height: 27px; font-weight: 800; color: #1a1a2e; letter-spacing: -.6px; }
.tag { height: 22px; margin-top: 7px; padding: 0 9px; border-radius: 11px; font-style: normal; font-size: 13px; line-height: 22px; font-weight: 800; letter-spacing: .8px; color: #fff; }

.vocab { border-color: #7b2d8e; }
.history { border-color: #1f6fa5; }
.science { border-color: #2a9d5c; }
.math { border-color: #e63946; }
.dcard.math .tag { background: #e63946; }
.dcard.vocab .tag { background: #7b2d8e; }
.dcard.history .tag { background: #1f6fa5; }
.dcard.science .tag { background: #2a9d5c; }

.rfoot { flex: 1; padding: 20px 0 0 3px; background: #fff; text-align: center; font-size: 20px; line-height: 28px; color: #666; letter-spacing: -.2px; }
```
